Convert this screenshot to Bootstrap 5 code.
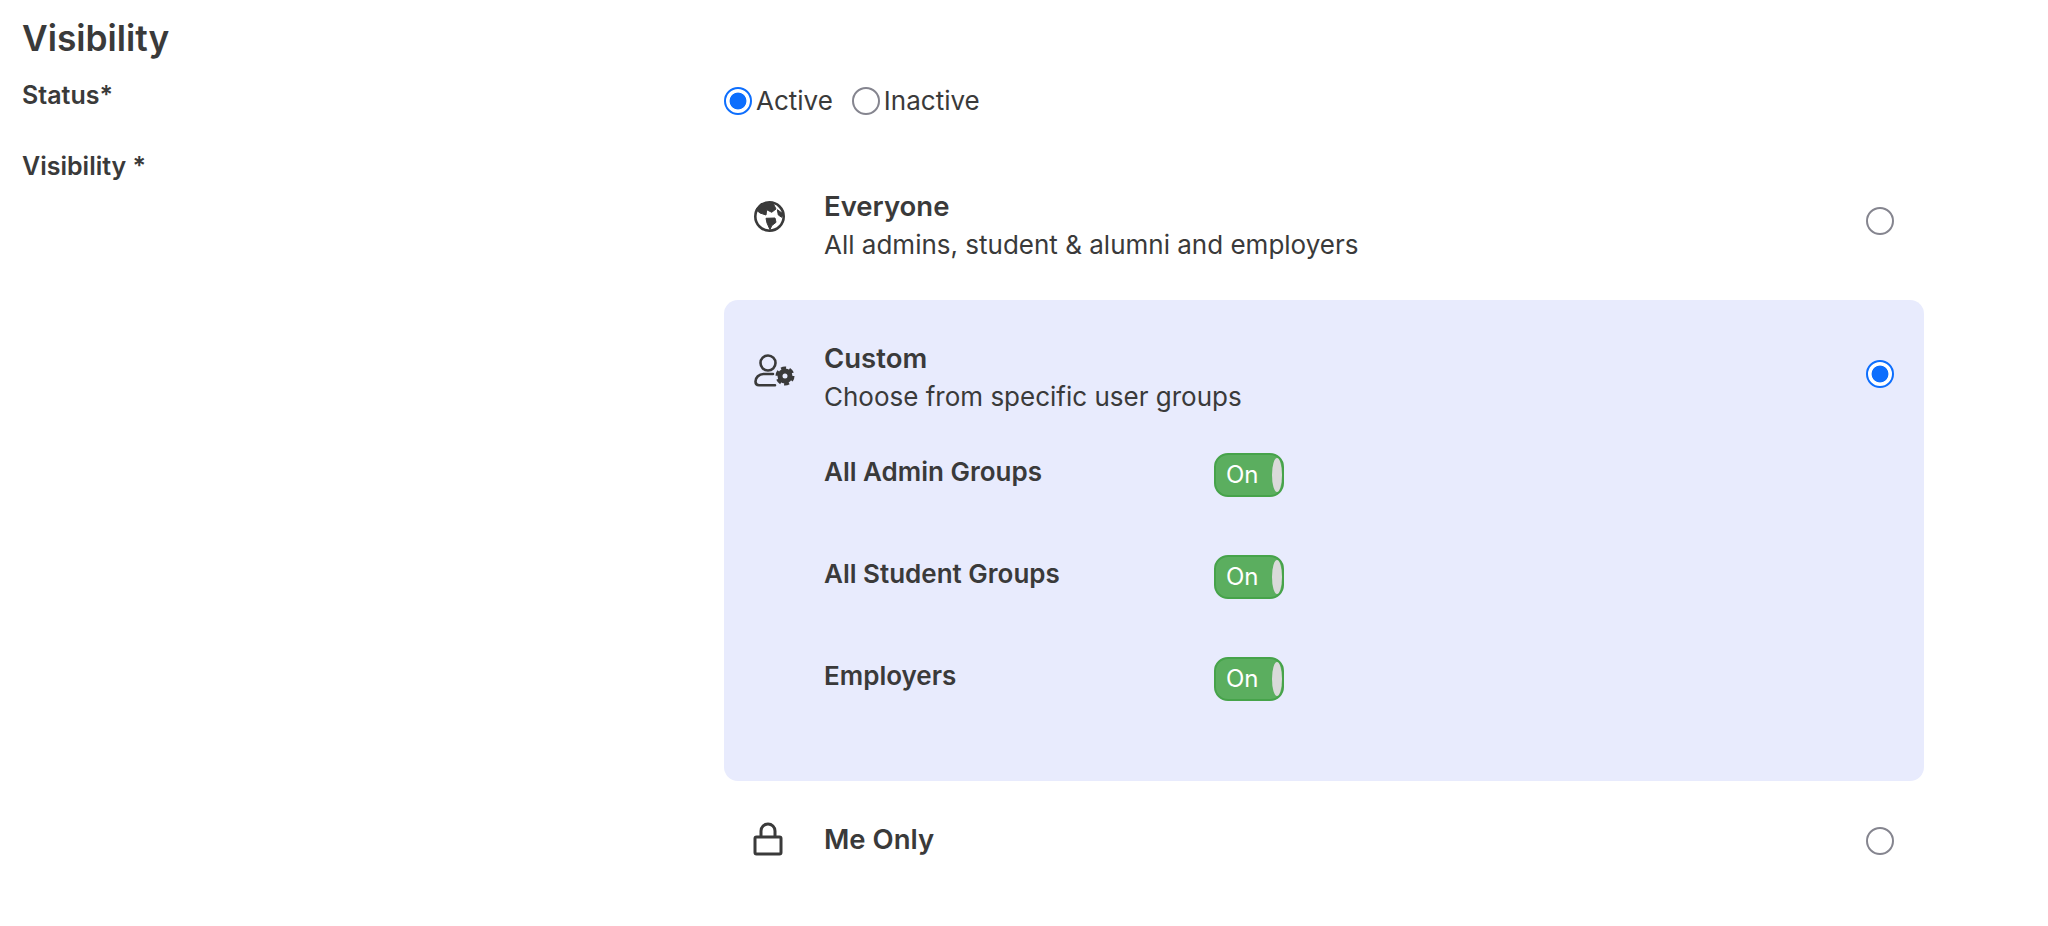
<!DOCTYPE html>
<html lang="en">

<head>
    <meta charset="UTF-8">
    <meta name="viewport" content="width=device-width, initial-scale=1.0">
    <title>Visibility</title>
    <link href="https://cdn.jsdelivr.net/npm/bootstrap@5.3.3/dist/css/bootstrap.min.css" rel="stylesheet">
    <style>
        body { font-family: Inter, "Liberation Sans", sans-serif; color: #3a3a3a; background: #fff; }
        .page-wrap { padding: 17px 0 0 22px; width: 1924px; }
        .sec-title { font-size: 35.3px; font-weight: 600; line-height: 44px; margin: 0; color: #3a3a3a; }
        .left-col { width: 702px; flex: none; }
        .field-label { font-size: 25px; font-weight: 600; line-height: 30px; margin: 0; }
        .status-row { margin-top: 19px; height: 71px; }
        .status-opts { padding-top: 4px; font-size: 26px; line-height: 34px; gap: 19px; }
        .status-opts label { margin-left: 4px; }
        .form-check-input.big-radio { width: 28px; height: 28px; margin: 0; flex: none; border: 2px solid #85858f; background-color: #fff; }
        .form-check-input.big-radio:checked { border-color: #0d6efd; background-color: #fff; background-image: radial-gradient(circle, #0d6efd 0, #0d6efd 8px, transparent 8.8px); }
        .vis-opt { padding: 39px 30px 0 30px; border-radius: 14px; gap: 29px; }
        .vis-opt-top { height: 149px; }
        .vis-opt-custom { background: #e8ebfd; height: 481px; padding-top: 42px; }
        .vis-opt-me { height: 120px; padding-top: 38px; }
        .opt-icon { width: 41px; flex: none; padding-top: 11px; }
        .opt-icon svg { display: block; }
        .opt-icon-custom { padding-top: 12px; }
        .opt-icon-lock { padding-top: 3px; margin-left: -1px; margin-right: 1px; }
        .opt-title { font-size: 27.5px; font-weight: 600; line-height: 32px; margin-bottom: 4px; }
        .opt-title-me { padding-top: 4px; }
        .opt-desc { font-size: 26px; line-height: 38px; }
        .radio-top { margin-top: 17px !important; }
        .radio-custom { margin-top: 18px !important; }
        .radio-me { margin-top: 8px !important; }
        .group-row { height: 102px; width: 460px; }
        .group-name { font-size: 26px; font-weight: 600; line-height: 34px; width: 390px; flex: none; margin-top: 2px; }
        .group-list { margin-top: 37px; }
        .on-toggle { width: 71px; height: 44px; border: 2px solid #46a34a; border-radius: 14px; background: #5bae5f; color: #fff; font-size: 24px; line-height: 40px; padding-left: 10px; position: relative; }
        .on-knob { position: absolute; right: 0; top: 3px; width: 10px; height: 34px; border-radius: 50%; background: #dadada; }
    </style>
</head>

<body>
    <div class="page-wrap">
        <h2 class="sec-title">Visibility</h2>

        <div class="d-flex status-row">
            <div class="left-col"><p class="field-label">Status*</p></div>
            <div class="d-flex align-items-center align-self-start status-opts">
                <div class="d-flex align-items-center">
                    <input class="form-check-input big-radio" type="radio" name="status" id="st-active" checked>
                    <label for="st-active">Active</label>
                </div>
                <div class="d-flex align-items-center">
                    <input class="form-check-input big-radio" type="radio" name="status" id="st-inactive">
                    <label for="st-inactive">Inactive</label>
                </div>
            </div>
        </div>

        <div class="d-flex">
            <div class="left-col"><p class="field-label">Visibility *</p></div>
            <div class="flex-grow-1">
                <div class="d-flex vis-opt vis-opt-top">
                    <div class="opt-icon">
                        <svg width="31" height="31" viewBox="0 0 31 31" aria-hidden="true">
                            <circle cx="15.5" cy="15.5" r="14.2" fill="none" stroke="#3a3a3a" stroke-width="2.6"/>
                            <path d="M7 2.5L19 2l3 6-4.3 3.3-5-2.6-.7 5.3-6-2-4-3.3z" fill="#3a3a3a" stroke="#3a3a3a" stroke-linejoin="round"/>
                            <path d="M12 17.3l9-.3 1 4.3-4.3 3.4-1.7 4-3-6.7z" fill="#3a3a3a" stroke="#3a3a3a" stroke-linejoin="round"/>
                            <path d="M23.3 8.7l6 4.3-1.6 3.3-3.4-2.3z" fill="#3a3a3a" stroke="#3a3a3a" stroke-linejoin="round"/>
                        </svg>
                    </div>
                    <div class="flex-grow-1">
                        <div class="opt-title">Everyone</div>
                        <div class="opt-desc">All admins, student &amp; alumni and employers</div>
                    </div>
                    <input class="form-check-input big-radio radio-top" type="radio" name="vis">
                </div>

                <div class="d-flex vis-opt vis-opt-custom">
                    <div class="opt-icon opt-icon-custom">
                        <svg width="41" height="34" viewBox="0 0 41 34" fill="none" aria-hidden="true">
                            <circle cx="14" cy="9" r="7.5" stroke="#3a3a3a" stroke-width="2.6"/>
                            <path d="M19 20H9.5C5 20 1.5 23.5 1.5 27.5c0 2.2 1.3 3.7 3.5 3.7H21" stroke="#3a3a3a" stroke-width="2.6" stroke-linecap="round"/>
                            <circle cx="31" cy="22" r="5" stroke="#3a3a3a" stroke-width="5"/>
                            <circle cx="31" cy="22" r="8" stroke="#3a3a3a" stroke-width="3" stroke-dasharray="5 3.38"/>
                        </svg>
                    </div>
                    <div class="flex-grow-1">
                        <div class="opt-title">Custom</div>
                        <div class="opt-desc">Choose from specific user groups</div>
                        <div class="group-list">
                            <div class="d-flex group-row">
                                <div class="group-name">All Admin Groups</div>
                                <div class="on-toggle">On<span class="on-knob"></span></div>
                            </div>
                            <div class="d-flex group-row">
                                <div class="group-name">All Student Groups</div>
                                <div class="on-toggle">On<span class="on-knob"></span></div>
                            </div>
                            <div class="d-flex group-row">
                                <div class="group-name">Employers</div>
                                <div class="on-toggle">On<span class="on-knob"></span></div>
                            </div>
                        </div>
                    </div>
                    <input class="form-check-input big-radio radio-custom" type="radio" name="vis" checked>
                </div>

                <div class="d-flex vis-opt vis-opt-me">
                    <div class="opt-icon opt-icon-lock">
                        <svg width="30" height="34" viewBox="0 0 30 34" fill="none" stroke="#3a3a3a" stroke-width="3" aria-hidden="true">
                            <rect x="2" y="15" width="26" height="17" rx="1.5"/>
                            <path d="M8 15V9a7 7 0 0 1 14 0v6"/>
                        </svg>
                    </div>
                    <div class="flex-grow-1 opt-title opt-title-me">Me Only</div>
                    <input class="form-check-input big-radio radio-me" type="radio" name="vis">
                </div>
            </div>
        </div>
    </div>
</body>

</html>
